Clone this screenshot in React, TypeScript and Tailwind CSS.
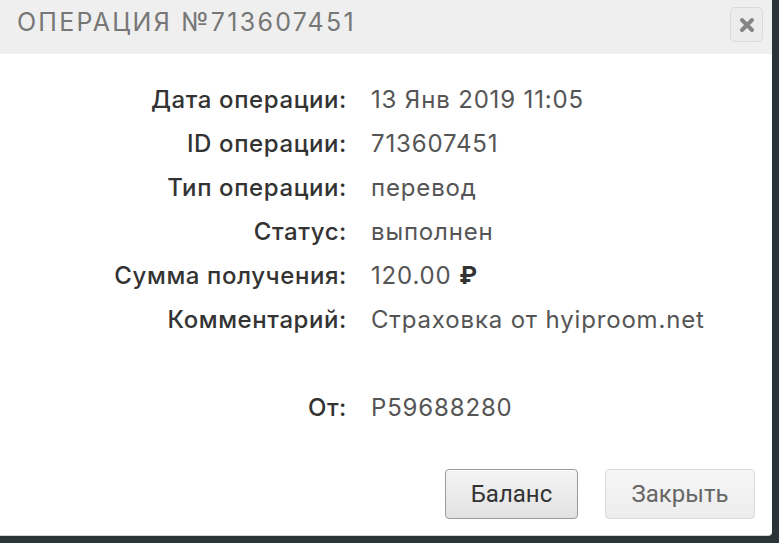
import React from "react";

const rows: [string, string][] = [
  ["Дата операции:", "13 Янв 2019 11:05"],
  ["ID операции:", "713607451"],
  ["Тип операции:", "перевод"],
  ["Статус:", "выполнен"],
  ["Сумма получения:", "120.00 ₽"],
  ["Комментарий:", "Страховка от hyiproom.net"],
  ["", ""],
  ["От:", "P59688280"],
];

export default function App() {
  return (
    <div className="w-[779px] h-[543px] bg-[#2a3439] overflow-hidden">
      <div className="w-[772px] h-[535px] bg-white rounded-br-[4px] flex flex-col shadow-[0_1px_0_#cfd3d5]">
        <div className="h-[54px] bg-[#efefef] flex items-start justify-between pl-[17px] pr-[9px]">
          <div
            className="text-[25px] leading-[30px] mt-[7px] tracking-[0.09em] text-[#777]"
            style={{ fontFamily: "Inter, 'Noto Sans', sans-serif" }}
          >
            ОПЕРАЦИЯ №713607451
          </div>
          <div className="w-[33px] h-[35px] mt-[7px] rounded-[5px] border border-[#d9d9d9] bg-[#ececec] flex items-center justify-center">
            <svg width="16" height="16" viewBox="0 0 16 16">
              <path d="M3 3 L13 13 M13 3 L3 13" stroke="#858585" strokeWidth="4" strokeLinecap="round" />
            </svg>
          </div>
        </div>
        <div
          className="grid grid-cols-[347px_1fr] gap-x-[24px] pt-[24px] text-[24px] leading-[44px]"
          style={{ fontFamily: "Inter, 'Noto Sans', sans-serif" }}
        >
          {rows.map(([l, v], i) => (
            <React.Fragment key={i}>
              <div className="text-right font-medium text-[#333] h-[44px] tracking-[0.025em]">{l}</div>
              <div className="text-[#555] h-[44px] tracking-[0.035em]">
                {v.endsWith("₽") ? (
                  <>
                    {v.slice(0, -1)}
                    <span className="font-bold text-[#333]">₽</span>
                  </>
                ) : (
                  v
                )}
              </div>
            </React.Fragment>
          ))}
        </div>
        <div
          className="flex justify-end gap-[27px] pr-[17px] mt-[39px]"
          style={{ fontFamily: "Roboto, 'Noto Sans', sans-serif" }}
        >
          <button className="w-[133px] h-[50px] rounded-[4px] border border-[#9a9a9a] bg-gradient-to-b from-[#f4f4f4] to-[#e2e2e2] text-[24px] text-[#333] shadow-[inset_0_1px_0_#fff]">
            Баланс
          </button>
          <button className="w-[150px] h-[50px] rounded-[4px] border border-[#dcdcdc] bg-gradient-to-b from-[#f7f7f7] to-[#ececec] text-[24px] text-[#666]">
            Закрыть
          </button>
        </div>
      </div>
    </div>
  );
}
